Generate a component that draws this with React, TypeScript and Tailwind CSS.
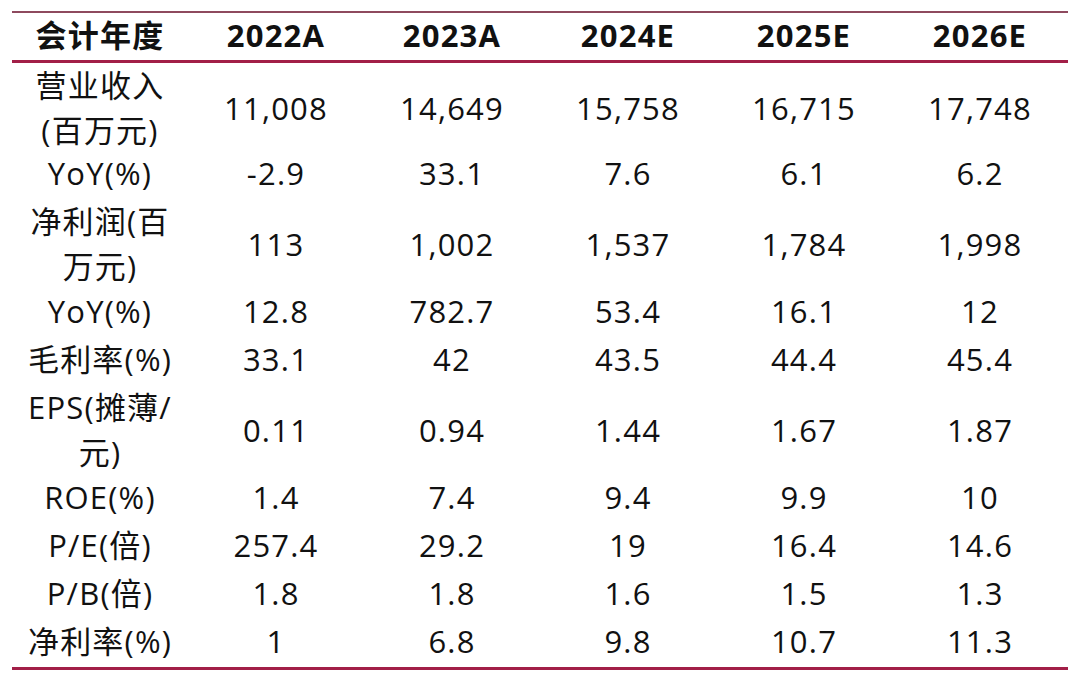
const years = ['2022A', '2023A', '2024E', '2025E', '2026E']

type Row = { label: string[]; values: string[] }

const rows: Row[] = [
  { label: ['营业收入', '(百万元)'], values: ['11,008', '14,649', '15,758', '16,715', '17,748'] },
  { label: ['YoY(%)'], values: ['-2.9', '33.1', '7.6', '6.1', '6.2'] },
  { label: ['净利润(百', '万元)'], values: ['113', '1,002', '1,537', '1,784', '1,998'] },
  { label: ['YoY(%)'], values: ['12.8', '782.7', '53.4', '16.1', '12'] },
  { label: ['毛利率(%)'], values: ['33.1', '42', '43.5', '44.4', '45.4'] },
  { label: ['EPS(摊薄/', '元)'], values: ['0.11', '0.94', '1.44', '1.67', '1.87'] },
  { label: ['ROE(%)'], values: ['1.4', '7.4', '9.4', '9.9', '10'] },
  { label: ['P/E(倍)'], values: ['257.4', '29.2', '19', '16.4', '14.6'] },
  { label: ['P/B(倍)'], values: ['1.8', '1.8', '1.6', '1.5', '1.3'] },
  { label: ['净利率(%)'], values: ['1', '6.8', '9.8', '10.7', '11.3'] },
]

export default function App() {
  return (
    <div
      className="h-[681px] w-[1080px] bg-white px-[12px] pt-[11px] text-[31px] tracking-[1.2px] text-[#111]"
      style={{ fontFamily: '"Open Sans", "Noto Sans CJK SC", sans-serif' }}
    >
      <div className="border-t-2 border-b-[3px] border-t-[#8e4a5e] border-b-[#a21f47]">
        <div className="grid h-[47px] grid-cols-6 items-center pb-[2px] font-bold leading-none">
          <div className="text-center">会计年度</div>
          {years.map((y) => (
            <div key={y} className="text-center">
              {y}
            </div>
          ))}
        </div>
      </div>

      {/* 数据行 */}
      <div className="border-b-[3px] border-[#a21f47]">
        {rows.map((r, i) => (
          <div
            key={i}
            className={`grid grid-cols-6 items-center pb-[6px] leading-[45px] ${
              r.label.length > 1 ? (i === 0 ? 'h-[88px]' : 'h-[90px]') : 'h-[48px]'
            }`}
          >
            <div className="whitespace-nowrap text-center">
              {r.label.map((l, j) => (
                <div key={j}>{l}</div>
              ))}
            </div>
            {r.values.map((v, j) => (
              <div key={j} className="text-center">
                {v}
              </div>
            ))}
          </div>
        ))}
      </div>
    </div>
  )
}
